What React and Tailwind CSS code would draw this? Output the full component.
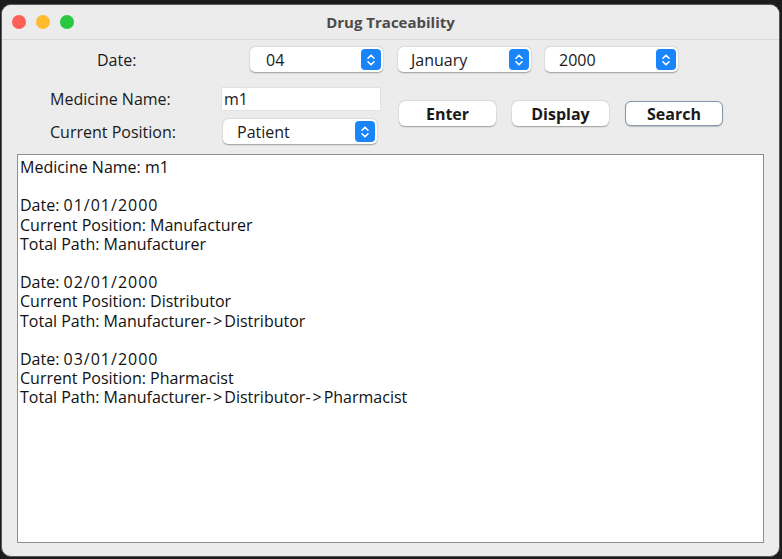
import React from "react";

const font = { fontFamily: '"Open Sans", "Noto Sans", sans-serif' };

function Chevrons() {
  return (
    <div className="flex h-[21px] w-[20px] items-center justify-center rounded-[4px] bg-[#1a84fb]">
      <svg width="10" height="14" viewBox="0 0 10 14" fill="none">
        <path d="M2 5.2 L5 2.2 L8 5.2" stroke="white" strokeWidth="1.6" strokeLinecap="round" strokeLinejoin="round" />
        <path d="M2 8.8 L5 11.8 L8 8.8" stroke="white" strokeWidth="1.6" strokeLinecap="round" strokeLinejoin="round" />
      </svg>
    </div>
  );
}

function Combo({ value, width, padL = 16 }) {
  return (
    <div
      className="flex h-[25px] items-center justify-between rounded-[5px] bg-white pr-[2px] shadow-[0_0.5px_1.5px_rgba(0,0,0,0.35)]"
      style={{ width }}
    >
      <span className="text-[16px] leading-none text-[#1a1a1a]" style={{ paddingLeft: padL }}>
        {value}
      </span>
      <Chevrons />
    </div>
  );
}

function Button({ label, width, focused }) {
  return (
    <div
      className={
        "flex h-[25px] items-center justify-center rounded-[6px] bg-white text-[16px] font-bold text-[#1a1a1a] " +
        (focused
          ? "border-[1.5px] border-[#8597ae] shadow-[0_0.5px_1px_rgba(0,0,0,0.2)]"
          : "shadow-[0_0.5px_1.5px_rgba(0,0,0,0.35)]")
      }
      style={{ width }}
    >
      {label}
    </div>
  );
}

const lines = [
  "Medicine Name: m1",
  "",
  "Date: 01/01/2000",
  "Current Position: Manufacturer",
  "Total Path: Manufacturer",
  "",
  "Date: 02/01/2000",
  "Current Position: Distributor",
  "Total Path: Manufacturer->Distributor",
  "",
  "Date: 03/01/2000",
  "Current Position: Pharmacist",
  "Total Path: Manufacturer->Distributor->Pharmacist",
];

function Line({ text }) {
  const parts = text.split(/([0-9/]+|->)/);
  return (
    <>
      {parts.map((p, i) => {
        if (p === "->") return <span key={i} className="tracking-[2px]">{p}</span>;
        if (/^[0-9/]+$/.test(p) && p.length > 2) return <span key={i} className="tracking-[1px]">{p}</span>;
        return <span key={i}>{p}</span>;
      })}
    </>
  );
}

export default function App() {
  return (
    <div className="h-[559px] w-[782px] overflow-hidden bg-[#1c1c1e] pt-[4px] pl-[1px]" style={font}>
      <div className="flex h-[553px] w-[779px] flex-col overflow-hidden rounded-[10px] border border-[#5a5a5a] bg-[#ececec]">
        {/* Title bar */}
        <div className="relative flex h-[35px] shrink-0 items-center border-b border-[#d9d9d9] bg-[#ececec]">
          <div className="flex items-center gap-[10px] pl-[10px]">
            <div className="h-[14px] w-[14px] rounded-full bg-[#fe5f57]" />
            <div className="h-[14px] w-[14px] rounded-full bg-[#febc2e]" />
            <div className="h-[14px] w-[14px] rounded-full bg-[#28c840]" />
          </div>
          <div className="absolute inset-x-0 top-0 flex h-full items-center justify-center text-[15px] font-bold text-[#4b4b4b]">
            Drug Traceability
          </div>
        </div>

        {/* Date row */}
        <div className="mt-[7px] flex h-[25px] items-center">
          <div className="w-[248px] pl-[95px] text-[16px] text-[#1a1a1a]">Date:</div>
          <Combo value="04" width={133} />
          <div className="w-[15px]" />
          <Combo value="January" width={133} padL={13} />
          <div className="w-[14px]" />
          <Combo value="2000" width={133} padL={14} />
        </div>

        {/* Name / position + buttons */}
        <div className="mt-[15px] flex">
          <div className="flex flex-col gap-[8px]">
            <div className="flex h-[24px] items-center">
              <div className="w-[219px] pl-[48px] text-[16px] text-[#1a1a1a]">Medicine Name:</div>
              <div className="flex h-[24px] w-[160px] items-center border border-[#e2e2e2] bg-white pl-[2px] text-[16px] text-[#1a1a1a]">
                m1
              </div>
            </div>
            <div className="flex h-[25px] items-center">
              <div className="w-[221px] pl-[48px] text-[16px] text-[#1a1a1a]">Current Position:</div>
              <Combo value="Patient" width={154} padL={14} />
            </div>
          </div>
          <div className="ml-[18px] mt-[14px] flex gap-[16px] self-start">
            <Button label="Enter" width={97} />
            <Button label="Display" width={97} />
            <Button label="Search" width={98} focused />
          </div>
        </div>

        {/* Text area */}
        <div className="ml-[15px] mt-[10px] h-[389px] w-[747px] border border-[#8e8e8e] bg-white pl-[2px] pt-[3px] text-[16px] leading-[19.2px] text-[#111]">
          {lines.map((l, i) => (
            <div key={i} className="h-[19.2px] whitespace-pre">
              <Line text={l} />
            </div>
          ))}
        </div>
      </div>
    </div>
  );
}
